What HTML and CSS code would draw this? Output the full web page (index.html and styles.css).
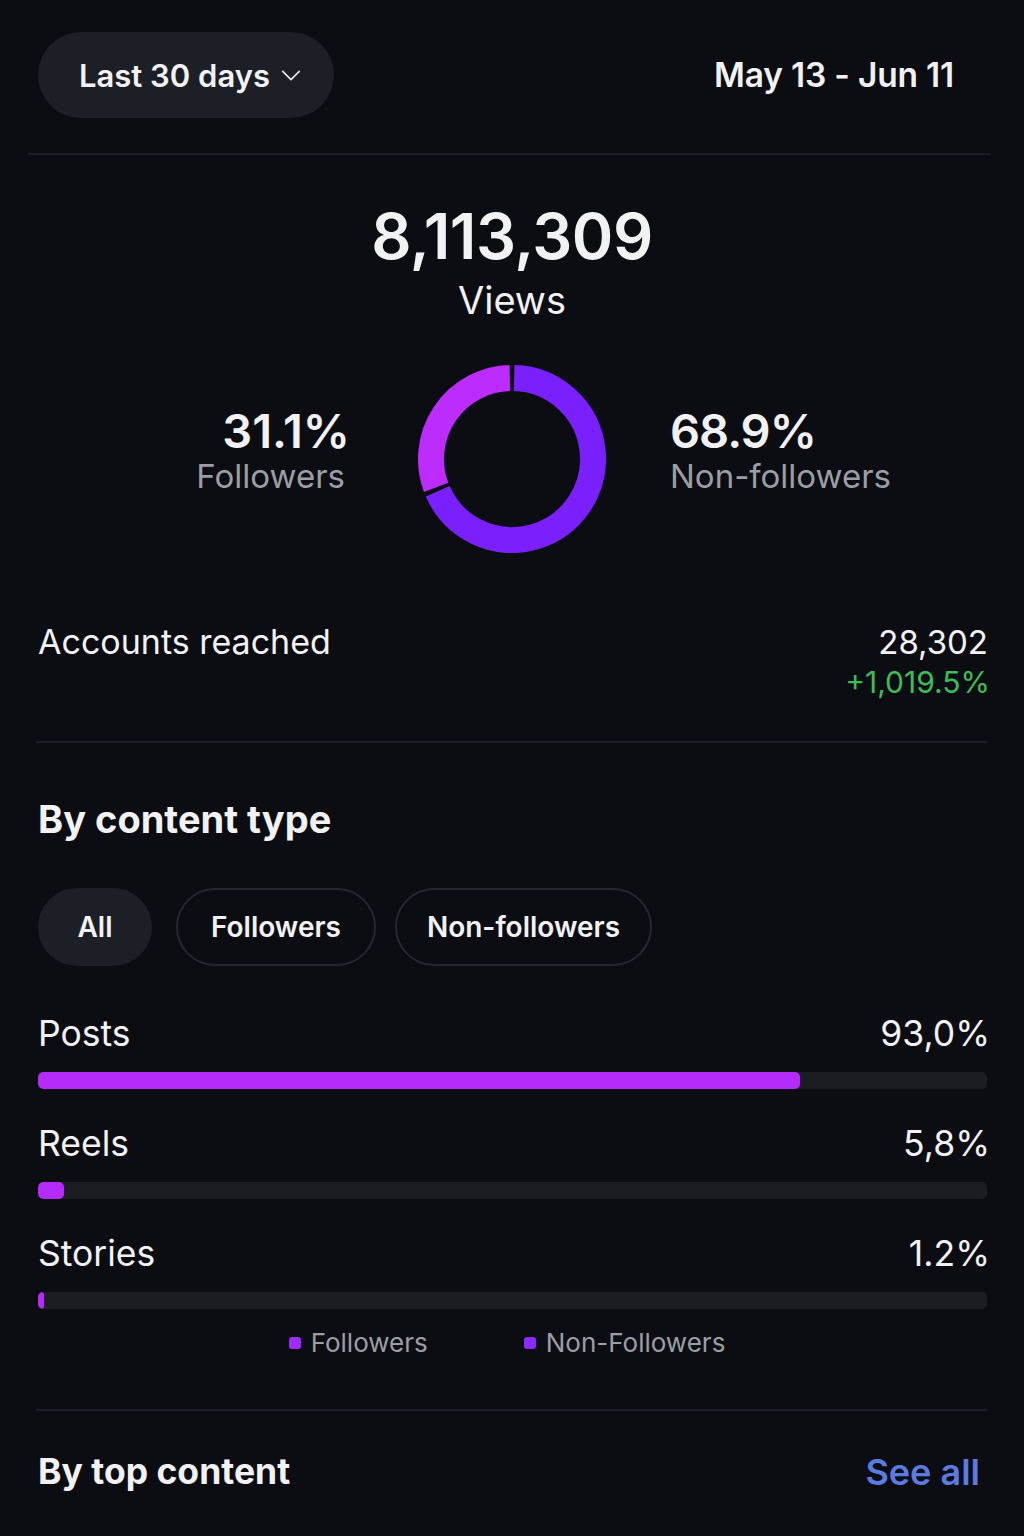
FILE: index.html
```
<!DOCTYPE html>
<html lang="en">
<head>
<meta charset="utf-8">
<title>Insights</title>
<link rel="stylesheet" href="styles.css">
</head>
<body>
<div class="page">
  <header class="topbar">
    <button class="range-pill">
      <span>Last 30 days</span>
      <svg class="chev" viewBox="0 0 24 24" width="24" height="24"><path d="M3 8 L12 17 L21 8" fill="none" stroke="#e9e9ec" stroke-width="1.8" stroke-linecap="round" stroke-linejoin="round"/></svg>
    </button>
    <div class="date-range">May 13 - Jun 11</div>
  </header>
  <div class="divider top-divider"></div>

  <section class="hero">
    <div class="hero-number">8,113,309</div>
    <div class="hero-label">Views</div>
  </section>

  <section class="split">
    <div class="split-side left">
      <div class="split-pct">31.1%</div>
      <div class="split-label">Followers</div>
    </div>
    <svg class="donut" viewBox="0 0 188 188" width="188" height="188">
      <path d="M96.12 13.03 A81 81 0 1 1 19.72 126.30" fill="none" stroke="#7a20fd" stroke-width="26"/>
      <path d="M18.13 122.37 A81 81 0 0 1 91.88 13.03" fill="none" stroke="#bb2cfd" stroke-width="26"/>
    </svg>
    <div class="split-side right">
      <div class="split-pct">68.9%</div>
      <div class="split-label">Non-followers</div>
    </div>
  </section>

  <section class="reach">
    <div class="reach-label">Accounts reached</div>
    <div class="reach-values">
      <div class="reach-num">28,302</div>
      <div class="reach-change">+1,019.5%</div>
    </div>
  </section>

  <div class="divider content-divider"></div>

  <h2 class="section-title type-title">By content type</h2>

  <div class="chips">
    <button class="chip active">All</button>
    <button class="chip">Followers</button>
    <button class="chip">Non-followers</button>
  </div>

  <div class="bars">
    <div class="bar-row">
      <div class="bar-head"><span>Posts</span><span>93,0%</span></div>
      <div class="track"><div class="fill" style="width:80.3%"></div></div>
    </div>
    <div class="bar-row">
      <div class="bar-head"><span>Reels</span><span>5,8%</span></div>
      <div class="track"><div class="fill" style="width:2.7%"></div></div>
    </div>
    <div class="bar-row">
      <div class="bar-head"><span>Stories</span><span>1.2%</span></div>
      <div class="track"><div class="fill thin" style="width:0.6%"></div></div>
    </div>
  </div>

  <div class="legend">
    <div class="legend-item"><span class="dot dot-f"></span>Followers</div>
    <div class="legend-item"><span class="dot dot-nf"></span>Non-Followers</div>
  </div>

  <div class="divider content-divider bottom-divider"></div>

  <section class="top-content">
    <h2 class="section-title">By top content</h2>
    <a class="see-all">See all</a>
  </section>
</div>
</body>
</html>
```

FILE: styles.css
```
* { box-sizing: border-box; }
html, body {
  margin: 0;
  padding: 0;
  background: #0b0d12;
}
body {
  font-family: Inter, "Noto Sans", "Liberation Sans", sans-serif;
  color: #f2f2f4;
  height: 1536px;
  overflow: hidden;
}
.page {
  width: 1024px;
}
.topbar {
  display: flex;
  align-items: center;
  justify-content: space-between;
  padding: 32px 70px 0 38px;
}
.range-pill {
  height: 86px;
  width: 296px;
  border-radius: 43px;
  border: none;
  background: #1c1f25;
  color: #f2f2f4;
  font-family: inherit;
  font-size: 31px;
  font-weight: 600;
  display: flex;
  align-items: center;
  gap: 10px;
  padding: 0 0 0 41px;
}
.chev { width: 22px; height: 22px; }
.date-range {
  font-size: 33.5px;
  font-weight: 600;
  letter-spacing: -0.2px;
}
.divider {
  height: 2px;
  background: #1b1e24;
}
.top-divider {
  margin: 35px 34px 0 28px;
}
.hero {
  text-align: center;
  margin-top: 48px;
}
.hero-number {
  font-size: 63px;
  font-weight: 600;
  line-height: 66px;
  letter-spacing: -0.5px;
}
.hero-label {
  font-size: 38px;
  font-weight: 400;
  line-height: 46px;
  margin-top: 8px;
}
.split {
  display: grid;
  grid-template-columns: 1fr auto 1fr;
  align-items: center;
  column-gap: 64px;
  margin-top: 42px;
}
.split-side.left { text-align: right; padding-right: 4px; }
.split-side.left .split-label { padding-right: 5px; }
.split-side.right { text-align: left; padding-left: 0; }
.split-pct {
  font-size: 47px;
  font-weight: 600;
  line-height: 52px;
}
.split-side.right .split-pct { letter-spacing: -1px; }
.split-label {
  font-size: 33px;
  font-weight: 400;
  color: #9c9ea5;
  line-height: 38px;
  margin-bottom: 18px;
}
.donut { display: block; }
.reach {
  display: flex;
  justify-content: space-between;
  align-items: flex-start;
  padding: 0 36px 0 38px;
  margin-top: 68px;
}
.reach-label {
  font-size: 34px;
  line-height: 42px;
}
.reach-values { text-align: right; }
.reach-num {
  font-size: 33px;
  line-height: 42px;
}
.reach-change {
  font-size: 30px;
  line-height: 38px;
  color: #3dbd58;
}
.reach-change { margin-right: -2px; }
.content-divider {
  margin: 40px 37px 0 36px;
}
.section-title {
  margin: 0;
  font-size: 38px;
  font-weight: 700;
  line-height: 44px;
}
.type-title {
  padding-left: 38px;
  margin-top: 54px;
}
.chips {
  display: flex;
  padding-left: 38px;
  margin-top: 47px;
}
.chip {
  height: 78px;
  border-radius: 39px;
  border: 2px solid #25282e;
  background: transparent;
  color: #f2f2f4;
  font-family: inherit;
  font-size: 28px;
  font-weight: 600;
  padding: 0;
  display: flex;
  align-items: center;
  justify-content: center;
}
.chip:nth-child(1) { width: 114px; margin-right: 24px; }
.chip:nth-child(2) { width: 200px; margin-right: 19px; }
.chip:nth-child(3) { width: 257px; }
.chip.active {
  background: #1c1f25;
  border-color: #1c1f25;
}
.bars {
  padding: 0 37px 0 38px;
  margin-top: 47px;
}
.bar-row + .bar-row { margin-top: 34px; }
.bar-head {
  display: flex;
  justify-content: space-between;
  font-size: 35.5px;
  line-height: 42px;
  margin-right: -3px;
}
.track {
  margin-top: 17px;
  height: 17px;
  border-radius: 5px;
  background: #1b1d23;
  overflow: hidden;
}
.fill {
  height: 100%;
  border-radius: 5px;
  background: #b52bf9;
}
.fill.thin { border-radius: 3px; min-width: 5px; }
.legend {
  display: flex;
  justify-content: center;
  gap: 96px;
  margin-top: 16px;
  padding-right: 10px;
  font-size: 26px;
  line-height: 36px;
  color: #9c9ea5;
}
.legend-item {
  display: flex;
  align-items: center;
  gap: 10px;
}
.dot {
  width: 12px;
  height: 12px;
  border-radius: 3px;
}
.dot-f { background: #a02cfb; }
.dot-nf { background: #8a2cff; }
.bottom-divider { margin-top: 48px; }
.top-content {
  display: flex;
  justify-content: space-between;
  align-items: center;
  padding: 0 44px 0 38px;
  margin-top: 39px;
}
.top-content .section-title { font-size: 35.5px; }
.see-all {
  font-size: 36px;
  font-weight: 600;
  color: #5b7be0;
}
```
